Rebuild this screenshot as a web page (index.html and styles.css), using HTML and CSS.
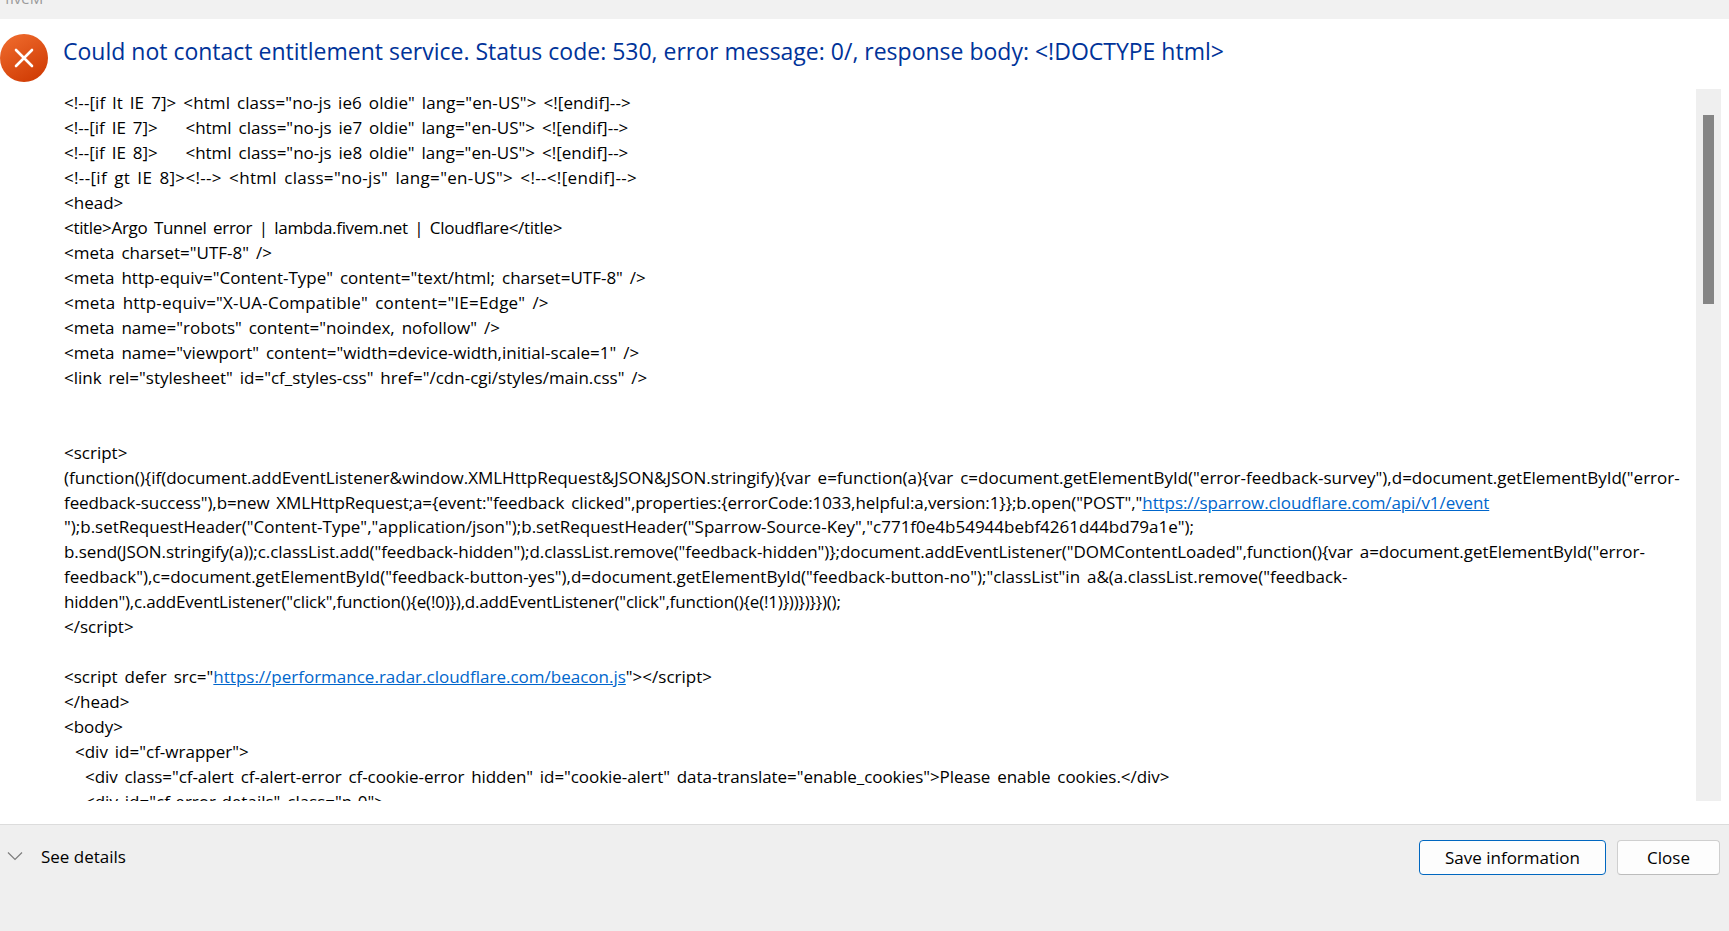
FILE: index.html
```html
<!DOCTYPE html>
<html lang="en">
<head>
<meta charset="utf-8">
<title>Error</title>
<link rel="stylesheet" href="styles.css">
</head>
<body>
<div class="app">
  <div class="topbar"><span class="apptitle">fiveM</span></div>
  <div class="main">
    <header class="head">
      <svg class="erricon" width="48" height="48" viewBox="0 0 48 48">
        <defs><linearGradient id="g" x1="0.2" y1="0" x2="0.8" y2="1"><stop offset="0" stop-color="#ee6a2c"/><stop offset="1" stop-color="#cf3a03"/></linearGradient></defs>
        <circle cx="24" cy="24" r="24" fill="url(#g)"/>
        <path d="M16 16 L32 32 M32 16 L16 32" stroke="#fff" stroke-width="2.6" stroke-linecap="round" fill="none"/>
      </svg>
      <h1 class="title">Could not contact entitlement service. Status code: 530, error message: 0/, response body: &lt;!DOCTYPE html&gt;</h1>
    </header>
    <div class="bodyrow">
      <div class="code">
<div class="ln wide-s">&lt;!--[if lt IE 7]&gt; &lt;html class="no-js ie6 oldie" lang="en-US"&gt; &lt;![endif]--&gt;</div>
<div class="ln">&lt;!--[if IE 7]&gt;    &lt;html class="no-js ie7 oldie" lang="en-US"&gt; &lt;![endif]--&gt;</div>
<div class="ln">&lt;!--[if IE 8]&gt;    &lt;html class="no-js ie8 oldie" lang="en-US"&gt; &lt;![endif]--&gt;</div>
<div class="ln wide-l">&lt;!--[if gt IE 8]&gt;&lt;!--&gt; &lt;html class="no-js" lang="en-US"&gt; &lt;!--&lt;![endif]--&gt;</div>
<div class="ln">&lt;head&gt;</div>
<div class="ln tight-l">&lt;title&gt;Argo Tunnel error | lambda.fivem.net | Cloudflare&lt;/title&gt;</div>
<div class="ln">&lt;meta charset="UTF-8" /&gt;</div>
<div class="ln">&lt;meta http-equiv="Content-Type" content="text/html; charset=UTF-8" /&gt;</div>
<div class="ln wide-m">&lt;meta http-equiv="X-UA-Compatible" content="IE=Edge" /&gt;</div>
<div class="ln">&lt;meta name="robots" content="noindex, nofollow" /&gt;</div>
<div class="ln">&lt;meta name="viewport" content="width=device-width,initial-scale=1" /&gt;</div>
<div class="ln">&lt;link rel="stylesheet" id="cf_styles-css" href="/cdn-cgi/styles/main.css" /&gt;</div>
<div class="ln"> </div>
<div class="ln"> </div>
<div class="ln">&lt;script&gt;</div>
<div class="ln">(function(){if(document.addEventListener&amp;window.XMLHttpRequest&amp;JSON&amp;JSON.stringify){var e=function(a){var c=document.getElementById("error-feedback-survey"),d=document.getElementById("error-</div>
<div class="ln tight-s">feedback-success"),b=new XMLHttpRequest;a={event:"feedback clicked",properties:{errorCode:1033,helpful:a,version:1}};b.open("POST","<a href="#">https://sparrow.cloudflare.com/api/v1/event</a></div>
<div class="ln">");b.setRequestHeader("Content-Type","application/json");b.setRequestHeader("Sparrow-Source-Key","c771f0e4b54944bebf4261d44bd79a1e");</div>
<div class="ln tight-xs">b.send(JSON.stringify(a));c.classList.add("feedback-hidden");d.classList.remove("feedback-hidden")};document.addEventListener("DOMContentLoaded",function(){var a=document.getElementById("error-</div>
<div class="ln">feedback"),c=document.getElementById("feedback-button-yes"),d=document.getElementById("feedback-button-no");"classList"in a&amp;(a.classList.remove("feedback-</div>
<div class="ln tight-m">hidden"),c.addEventListener("click",function(){e(!0)}),d.addEventListener("click",function(){e(!1)}))})}})();</div>
<div class="ln">&lt;/script&gt;</div>
<div class="ln"> </div>
<div class="ln">&lt;script defer src="<a href="#">https://performance.radar.cloudflare.com/beacon.js</a>"&gt;&lt;/script&gt;</div>
<div class="ln">&lt;/head&gt;</div>
<div class="ln">&lt;body&gt;</div>
<div class="ln ind1">&lt;div id="cf-wrapper"&gt;</div>
<div class="ln ind2 tight-xs">&lt;div class="cf-alert cf-alert-error cf-cookie-error hidden" id="cookie-alert" data-translate="enable_cookies"&gt;Please enable cookies.&lt;/div&gt;</div>
<div class="ln ind2">&lt;div id="cf-error-details" class="p-0"&gt;</div>
      </div>
      <div class="scrollbar"><div class="thumb"></div></div>
    </div>
  </div>
  <footer class="foot">
    <div class="details">
      <svg class="chev" width="16" height="10" viewBox="0 0 16 10"><path d="M1 1.5 L8 8.5 L15 1.5" stroke="#7d7d7d" stroke-width="1.2" fill="none"/></svg>
      <span>See details</span>
    </div>
    <div class="actions">
      <button class="btn primary">Save information</button>
      <button class="btn plain">Close</button>
    </div>
  </footer>
</div>
</body>
</html>
```
FILE: styles.css
```css
* { box-sizing: border-box; }
html, body { margin: 0; height: 100%; overflow: hidden; }
body { font-family: "Open Sans", "Noto Sans", sans-serif; color: #000; background: #fff; }
.app { display: flex; flex-direction: column; height: 931px; }
.topbar { height: 19px; background: #f1f1f1; overflow: hidden; flex: none; }
.apptitle { display: block; margin: -11px 0 0 5px; font-size: 15px; line-height: 18px; color: #9a9a9a; }
.main { flex: 1; min-height: 0; display: flex; flex-direction: column; padding-bottom: 23px; border-bottom: 1px solid #dcdcdc; }
.head { flex: none; display: flex; align-items: flex-start; height: 70px; padding-top: 15px; }
.erricon { flex: none; margin-right: 15px; }
.title { margin: -1px 0 0; font-size: 23px; line-height: 36px; font-weight: 400; color: #003399; white-space: nowrap; }
.bodyrow { flex: 1; min-height: 0; display: flex; padding-right: 8px; }
.code { flex: 1; min-width: 0; overflow: hidden; padding: 1px 0 0 64px; font-size: 17px; line-height: 25px; color: #000; word-spacing: 2.5px; }
.ln { white-space: pre; height: 24.97px; }
.ln a { color: #0066cc; text-decoration: underline; }
.ind1 { padding-left: 11px; }
.ind2 { padding-left: 21px; }
.wide-s { letter-spacing: 0.08px; }
.wide-m { letter-spacing: 0.2px; }
.wide-l { letter-spacing: 0.32px; }
.tight-xs { letter-spacing: -0.06px; }
.tight-s { letter-spacing: -0.09px; }
.tight-m { letter-spacing: -0.18px; }
.tight-l { letter-spacing: -0.32px; }
.scrollbar { flex: none; width: 25px; background: #efefef; padding: 26px 7px 0; }
.thumb { height: 189px; background: #858585; }
.foot { flex: none; height: 106px; background: #efefef; display: flex; justify-content: space-between; align-items: flex-start; padding: 15px 9px 0 0; }
.details { display: flex; align-items: center; font-size: 17px; height: 32px; padding-left: 7px; }
.chev { margin-right: 18px; }
.actions { display: flex; gap: 11px; }
.btn { height: 35px; font: 400 17px/31px "Open Sans", sans-serif; color: #000; background: #fdfdfd; border-radius: 4px; padding: 0; }
.primary { width: 187px; border: 1px solid #0067c0; }
.plain { width: 103px; border: 1px solid #cfcfcf; border-bottom-color: #bcbcbc; }
```
